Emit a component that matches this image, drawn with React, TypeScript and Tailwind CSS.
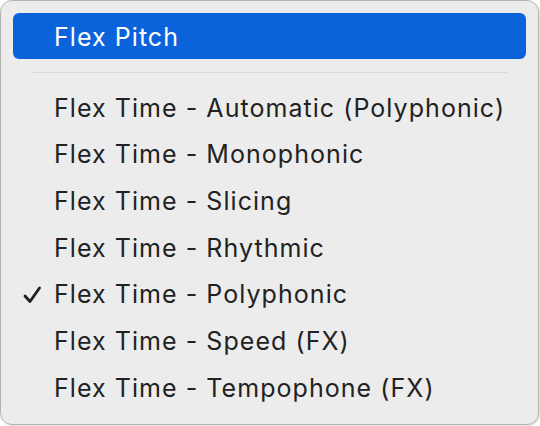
const items = [
  "Flex Time - Automatic (Polyphonic)",
  "Flex Time - Monophonic",
  "Flex Time - Slicing",
  "Flex Time - Rhythmic",
  "Flex Time - Polyphonic",
  "Flex Time - Speed (FX)",
  "Flex Time - Tempophone (FX)",
]

const checked = "Flex Time - Polyphonic"

export default function App() {
  return (
    <div className="w-[540px] h-[426px] bg-white font-['Inter','Liberation_Sans',sans-serif] tracking-[1.05px]">
      <div className="w-[539px] h-[425px] rounded-[12px] border border-[#b3b3b3] bg-[#ececec] p-[12px] shadow-[1px_1px_1px_rgba(0,0,0,0.12)]">
        {/* selected item */}
        <div className="flex h-[46px] items-center rounded-[6px] bg-[#0b63dc] pl-[41px] pt-[3px] text-[25px] text-white">
          Flex Pitch
        </div>

        {/* separator */}
        <div className="flex h-[26px] items-center px-[19px]">
          <div className="h-px w-full bg-[#d9d9d9]" />
        </div>

        {items.map((label) => (
          <div key={label} className="flex h-[46.7px] items-center text-[25px] text-[#222]">
            <div className="flex w-[41px] justify-start pl-[10px]">
              {label === checked && (
                <svg width="19" height="18" viewBox="0 0 19 18" fill="none">
                  <path
                    d="M2 10 L7 15.5 L16.5 2"
                    stroke="#1f1f1f"
                    strokeWidth="2.8"
                    strokeLinecap="round"
                    strokeLinejoin="round"
                  />
                </svg>
              )}
            </div>
            <span>{label}</span>
          </div>
        ))}
      </div>
    </div>
  )
}
